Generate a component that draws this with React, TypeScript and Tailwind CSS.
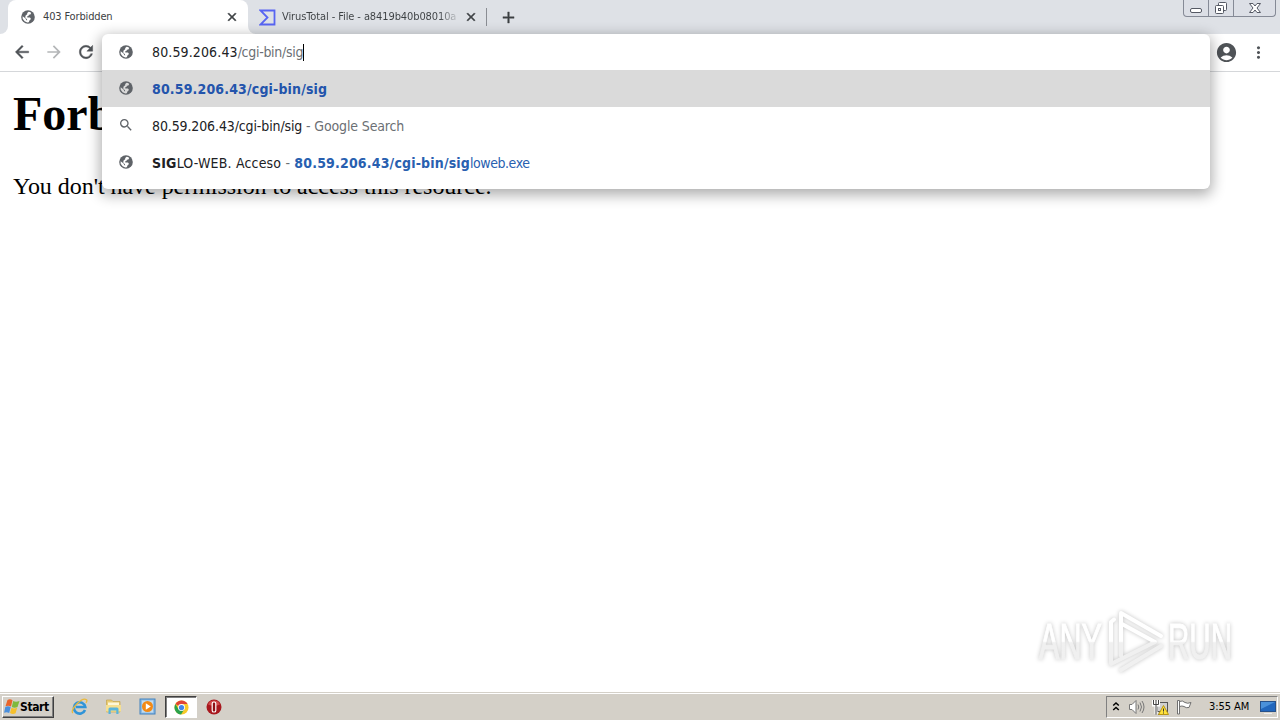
import { MdArrowForward, MdAccountCircle, MdMoreVert, MdSearch } from "react-icons/md";

function Globe({ back }: { back: string }) {
  return (
    <svg className="-mt-px shrink-0" width="16" height="16" viewBox="0 0 16 16">
      <circle cx="8" cy="8" r="6.800" fill="#5f6368" />
      <path d="M8.600 2.700 10 2.900 11.200 4 10.400 5.400 8.900 5.800 8.400 7.100 7 7.500 7.400 8.500 10 8.600 11 10 9.600 11.300 8.800 13.200 7.300 13.400 4.600 12.300 2.700 9.700 2.600 7.300 5.600 9.500 6.300 11.200 7.200 11.300 6.900 10.200 5.200 8.400 5.600 6.500 7.200 5.300 7.200 3.900Z" fill={back} />
    </svg>
  );
}

const glyphs = {
  back: "M20 11H7.830l5.590-5.590L12 4l-8 8 8 8 1.410-1.410L7.830 13H20v-2z",
  reload: "M17.650 6.350A7.958 7.958 0 0 0 12 4c-4.420 0-7.990 3.580-7.990 8s3.570 8 7.990 8c3.730 0 6.840-2.550 7.730-6h-2.080A5.990 5.990 0 0 1 12 18c-3.310 0-6-2.690-6-6s2.690-6 6-6c1.660 0 3.140.69 4.220 1.780L13 11h7V4l-2.350 2.350z",
  close: "M19 6.410 17.590 5 12 10.590 6.410 5 5 6.410 10.590 12 5 17.590 6.410 19 12 13.410 17.590 19 19 17.590 13.410 12z",
  add: "M19 13h-6v6h-2v-6H5v-2h6V5h2v6h6v2z",
};

function Glyph({ name, size, className }: { name: keyof typeof glyphs; size: number; className?: string }) {
  return (
    <svg className={className} width={size} height={size} viewBox="0 0 24 24" fill="currentColor" stroke="currentColor" strokeWidth={name === "close" ? 1 : 0.5}>
      <path d={glyphs[name]} />
    </svg>
  );
}

function WindowButtons() {
  return (
    <div className="ml-auto mr-[4px] flex h-[17px] w-[93px] rounded-b-[4px] border border-t-0 border-[#858a96] bg-[#dcdfe6]">
      <div className="flex w-[25px] items-center justify-center border-r border-[#858a96]">
        <svg width="14" height="16" viewBox="0 0 14 16"><rect x="1.5" y="8.5" width="11" height="4" rx="1.5" fill="#fff" stroke="#555964" /></svg>
      </div>
      <div className="flex w-[25px] items-center justify-center border-r border-[#858a96]">
        <svg width="14" height="16" viewBox="0 0 14 16" fill="#fff" stroke="#555964">
          <rect x="4.5" y="2.5" width="8" height="8" rx="1" />
          <rect x="1.5" y="5.5" width="8" height="8" rx="1" />
          <rect x="4.5" y="8.5" width="2" height="2" />
        </svg>
      </div>
      <div className="flex flex-1 items-center justify-center">
        <svg width="14" height="16" viewBox="0 0 14 16" fill="#fff" stroke="#555964">
          <path d="M1.5 3.5H5L7 6l2-2.500h3.500L9 8l3.500 4.500H9L7 10l-2 2.500H1.500L5 8Z" />
        </svg>
      </div>
    </div>
  );
}

function TabStrip() {
  return (
    <div className="flex h-[34px] shrink-0 bg-[#dee1e6]">
      <div className="flex w-[8px] shrink-0 bg-white"><div className="flex-1 rounded-br-[8px] bg-[#dee1e6]" /></div>
      <div className="flex w-[240px] shrink-0 items-center rounded-t-[8px] bg-white pl-[12px] pr-[9px]">
        <Globe back="#fff" />
        <span className="ml-[7px] whitespace-nowrap text-[11px] tracking-[-0.15px] text-[#3c4043]">403 Forbidden</span>
        <Glyph name="close" size={14} className="ml-auto text-[#3c4043]" />
      </div>
      <div className="flex w-[238px] shrink-0 bg-white">
        <div className="flex flex-1 items-center rounded-bl-[8px] bg-[#dee1e6] pl-[11px] pr-[8px]">
          <svg className="shrink-0" width="17" height="17" viewBox="0 0 17 17" fill="none" stroke="#5865f2" strokeWidth="1.8">
            <path d="M1.500 1.500h14v14h-14l7-7Z" />
          </svg>
          <span className="ml-[6px] whitespace-nowrap bg-gradient-to-r from-[#3c4043] from-90% to-[#3c4043]/20 bg-clip-text text-[11px] tracking-[-0.1px] text-transparent">VirusTotal - File - a8419b40b08010a</span>
          <Glyph name="close" size={14} className="ml-auto shrink-0 text-[#3c4043]" />
        </div>
      </div>
      <div className="mt-[8px] h-[18px] w-px bg-[#8a8d93]" />
      <div className="flex items-center pl-[12px] text-[#3c4043]"><Glyph name="add" size={19} /></div>
      <WindowButtons />
    </div>
  );
}

function Omnibox() {
  return (
    <div className="absolute left-[102px] top-[34px] h-[155px] w-[1108px] rounded-[6px] bg-white text-[14px] leading-[18px] text-[#202124] shadow-[0_4px_14px_2px_rgba(0,0,0,0.32)]">
      <div className="flex h-[36px] items-center pl-[16px]">
        <Globe back="#fff" />
        <span className="ml-[18px] whitespace-nowrap tracking-[0.13px]">80.59.206.43</span>
        <span className="whitespace-nowrap tracking-[-0.3px] text-[#6b6f74]">/cgi-bin/sig</span>
        <span className="h-[17px] w-px bg-black" />
      </div>
      <div className="flex h-[37px] items-center bg-[#dadada] pl-[16px]">
        <Globe back="#dadada" />
        <span className="ml-[18px] mt-px whitespace-nowrap font-bold tracking-[0.15px] text-[#2354ac]">80.59.206.43/cgi-bin/sig</span>
      </div>
      <div className="flex h-[37px] items-center pl-[16px]">
        <MdSearch size={16} className="-mt-px text-[#5f6368]" />
        <span className="ml-[18px] mt-px whitespace-pre tracking-[-0.12px]">80.59.206.43/cgi-bin/sig<span className="tracking-[-0.14px] text-[#6b6f74]"> - Google Search</span></span>
      </div>
      <div className="flex h-[37px] items-center pl-[16px]">
        <Globe back="#fff" />
        <span className="ml-[18px] mt-px whitespace-pre tracking-[0.18px]"><b>SIG</b>LO-WEB. Acceso<span className="text-[#6b6f74]"> - </span></span>
        <span className="mt-px whitespace-pre text-[#2860b0]"><b className="tracking-[0.17px]">80.59.206.43/cgi-bin/sig</b><span className="tracking-[-0.45px]">loweb.exe</span></span>
      </div>
    </div>
  );
}

function Watermark() {
  return (
    <svg className="absolute left-[1030px] top-[604px] drop-shadow-[0_0_2px_rgba(0,0,0,0.24)]" width="212" height="76" viewBox="0 0 212 76">
      <defs>
        <linearGradient id="fade" x1="0" y1="0" x2="0" y2="76" gradientUnits="userSpaceOnUse">
          <stop offset="0.49" stopColor="#ffffff" />
          <stop offset="0.51" stopColor="#f0f0f0" />
        </linearGradient>
      </defs>
      <g fill="url(#fade)" fontFamily="Liberation Sans Narrow, Liberation Sans, sans-serif" fontSize="50" stroke="url(#fade)" strokeWidth="1">
        <text x="9" y="55" textLength="63" lengthAdjust="spacingAndGlyphs">ANY</text>
        <text x="138" y="55" textLength="64" lengthAdjust="spacingAndGlyphs">RUN</text>
      </g>
      <g fill="none" stroke="url(#fade)" strokeWidth="4" strokeLinejoin="round" strokeLinecap="round">
        <path d="M84 15.500 81 18v42l44-22L92 20" />
        <path d="M91 52V9l40 23" />
        <path d="m91 66 40-24" />
      </g>
    </svg>
  );
}

function ChromeLogo() {
  return (
    <svg width="15" height="15" viewBox="0 0 16 16">
      <circle cx="8" cy="8" r="7.500" fill="#f7c928" />
      <path d="M8 8 1.500 4.250A7.500 7.500 0 0 1 14.500 4.250H8Z" fill="#e04436" />
      <path d="M1.500 4.250A7.500 7.500 0 0 0 7.500 15.480L11 9.800 8 8 4.800 9.800Z" fill="#2ba24c" />
      <circle cx="8" cy="8" r="3.700" fill="#fff" />
      <circle cx="8" cy="8" r="2.800" fill="#4285e8" />
    </svg>
  );
}

function Taskbar() {
  return (
    <div className="flex h-[28px] shrink-0 items-center border-t border-[#d4d0c8] bg-[#d4d0c8] shadow-[inset_0_1px_0_#fff]">
      <div className="ml-[2px] mt-[1px] flex h-[22px] w-[52px] items-center border border-b-[#404040] border-l-white border-r-[#404040] border-t-white pl-[1px] shadow-[inset_-1px_-1px_0_#808080]">
        <svg className="shrink-0" width="16" height="16" viewBox="0 0 16 16">
          <path d="M3.500 1q2.500-1.500 5 .3L7 7.500Q4.500 6 1.500 7.200Z" fill="#e8642a" />
          <path d="M9.200 2q2.500 1.500 6.300 0l-2 6.100q-3 1.400-5.700 0Z" fill="#7fb93d" />
          <path d="M1.300 8q2.700-1.400 5.400.1L5.200 14q-2.500-1.500-5.100-.3Z" fill="#4a8fdc" />
          <path d="M7.500 8.800q2.700 1.500 5.700 0l-1.600 5.500q-2.800 1.400-5.600-.2Z" fill="#f6c02c" />
        </svg>
        <span className="-mt-px whitespace-nowrap text-[12px] font-bold tracking-[-0.4px] text-black">Start</span>
      </div>
      <svg className="ml-[17px]" width="17" height="17" viewBox="0 0 17 17" fill="none">
        <path d="M14 12A5.700 5.700 0 1 1 14.300 9H5" stroke="#3094d8" strokeWidth="2.600" />
        <path d="M2 15C-2 12.500 11-1.500 15.500 1.700c.8.700.3 2-.6 3" stroke="#e9b93c" strokeWidth="1.300" />
      </svg>
      <svg className="ml-[17px]" width="17" height="17" viewBox="0 0 17 17">
        <path d="M1.500 2h5l1.500 1.500h7V14h-13.500Z" fill="#e9cc73" stroke="#c5a54e" strokeWidth=".7" />
        <path d="M3 4.500h11V8H3Z" fill="#fdf7d9" />
        <path d="M1 7h15v6.500H1Z" fill="#f5df91" />
        <path d="M3.500 16v-5q0-1.500 1.500-1.500h7q1.500 0 1.500 1.500v5h-2.200v-3.500H5.700V16Z" fill="#58b4dc" />
      </svg>
      <svg className="ml-[17px]" width="17" height="17" viewBox="0 0 17 17">
        <rect x="1" y="1" width="15" height="15" fill="#8dbce5" stroke="#4282be" />
        <rect x="3" y="2.500" width="11" height="12" fill="#c3dcef" />
        <circle cx="8.500" cy="8.500" r="5.500" fill="#f28a16" />
        <path d="M6.800 5.300 11.800 8.500l-5 3.200Z" fill="#fff" />
      </svg>
      <div className="ml-[9px] mt-[1px] flex h-[22px] w-[32px] items-center justify-center border border-b-white border-l-[#404040] border-r-white border-t-[#404040] bg-white shadow-[inset_1px_1px_0_#808080]">
        <ChromeLogo />
      </div>
      <svg className="ml-[9px]" width="16" height="16" viewBox="0 0 16 16">
        <circle cx="8" cy="8" r="7.500" fill="#a8181e" />
        <path d="M2 5.500A6.500 6.500 0 0 1 14 5.500Q8 8 2 5.500Z" fill="#d24a4b" />
        <rect x="6.200" y="3" width="3.600" height="10" rx="1.600" fill="#8f1015" stroke="#fff" strokeWidth="1.200" />
      </svg>
      <div className="ml-auto mr-[2px] mt-[1px] flex h-[22px] w-[172px] items-center border border-b-white border-l-[#808080] border-r-white border-t-[#808080]">
        <svg className="ml-[5px] shrink-0" width="8" height="12" viewBox="0 0 8 12" fill="none" stroke="#000" strokeWidth="1.500"><path d="m1.200 4.500 2.800-2.500 2.800 2.500M1.200 9l2.800-2.500L6.800 9" /></svg>
        <svg className="ml-[8px] shrink-0" width="17" height="16" viewBox="0 0 17 16" fill="none" stroke="#777">
          <path d="M1.500 5.500h2.500l4-4v13l-4-4H1.500Z" fill="#fff" />
          <path d="M10 5.500q1.500 2.500 0 5M12 3.500q3 4.500 0 9M14 2q4 6 0 12" />
        </svg>
        <svg className="ml-[7px] shrink-0" width="18" height="17" viewBox="0 0 18 17">
          <rect x="5.500" y="3.500" width="10" height="9" fill="#d0d0d0" stroke="#555" />
          <path d="M6 15.500h6" stroke="#555" />
          <path d="M1.500 1v5h5V1M4 1.500V6v9" fill="none" stroke="#fff" strokeWidth="3" />
          <path d="M1.500 1v4.500h5V1M4 1v14.500" fill="none" stroke="#444" />
          <path d="m11.500 6.500 5 9h-10Z" fill="#ffe23b" stroke="#b99613" />
          <path d="M11.500 9.500v3m0 1v1" stroke="#333" />
        </svg>
        <svg className="ml-[6px] shrink-0" width="17" height="16" viewBox="0 0 17 16" fill="#fff" stroke="#707070">
          <path d="M1.500 15V1.500h2V15ZM3.500 2.500q3-1.500 5.500 1 2.500 1.500 6 0l-2 5q-3 .8-5-1-2-1-4.500 0Z" />
        </svg>
        <span className="ml-[16px] mt-px w-[42px] shrink-0 whitespace-nowrap text-[11px] tracking-[-0.05px] text-black">3:55 AM</span>
        <svg className="ml-[9px] shrink-0" width="16" height="15" viewBox="0 0 16 15">
          <rect x=".5" y="1.500" width="15" height="10" fill="#2267bd" stroke="#27518a" />
          <path d="M1 2h14L1 9Z" fill="#4b91da" />
          <path d="M4 13.500h8" stroke="#eee" />
        </svg>
      </div>
    </div>
  );
}

export default function App() {
  return (
    <div className="relative flex h-[720px] w-[1280px] flex-col overflow-hidden bg-white font-['DejaVu_Sans_Condensed','DejaVu_Sans',sans-serif] [font-stretch:condensed]">
      <TabStrip />
      <div className="flex h-[38px] shrink-0 items-center border-b border-[#d5d7da] pb-px pl-[12px] text-[#4f5357]">
        <Glyph name="back" size={20} />
        <MdArrowForward size={20} className="ml-[12px] text-[#b4b6b8]" />
        <Glyph name="reload" size={20} className="ml-[12px]" />
        <MdAccountCircle size={23} className="ml-auto" />
        <MdMoreVert size={19} className="ml-[11px] mr-[12px]" />
      </div>
      <main className="flex-1 pl-[13px] font-['Liberation_Serif',serif] text-black">
        <h1 className="pt-[14px] text-[48px] font-bold leading-[55px]">Forbidden</h1>
        <p className="pt-[32px] text-[24px] leading-[27px] tracking-[-0.04px]">You don't have permission to access this resource.</p>
      </main>
      <Taskbar />
      <Omnibox />
      <Watermark />
    </div>
  );
}
